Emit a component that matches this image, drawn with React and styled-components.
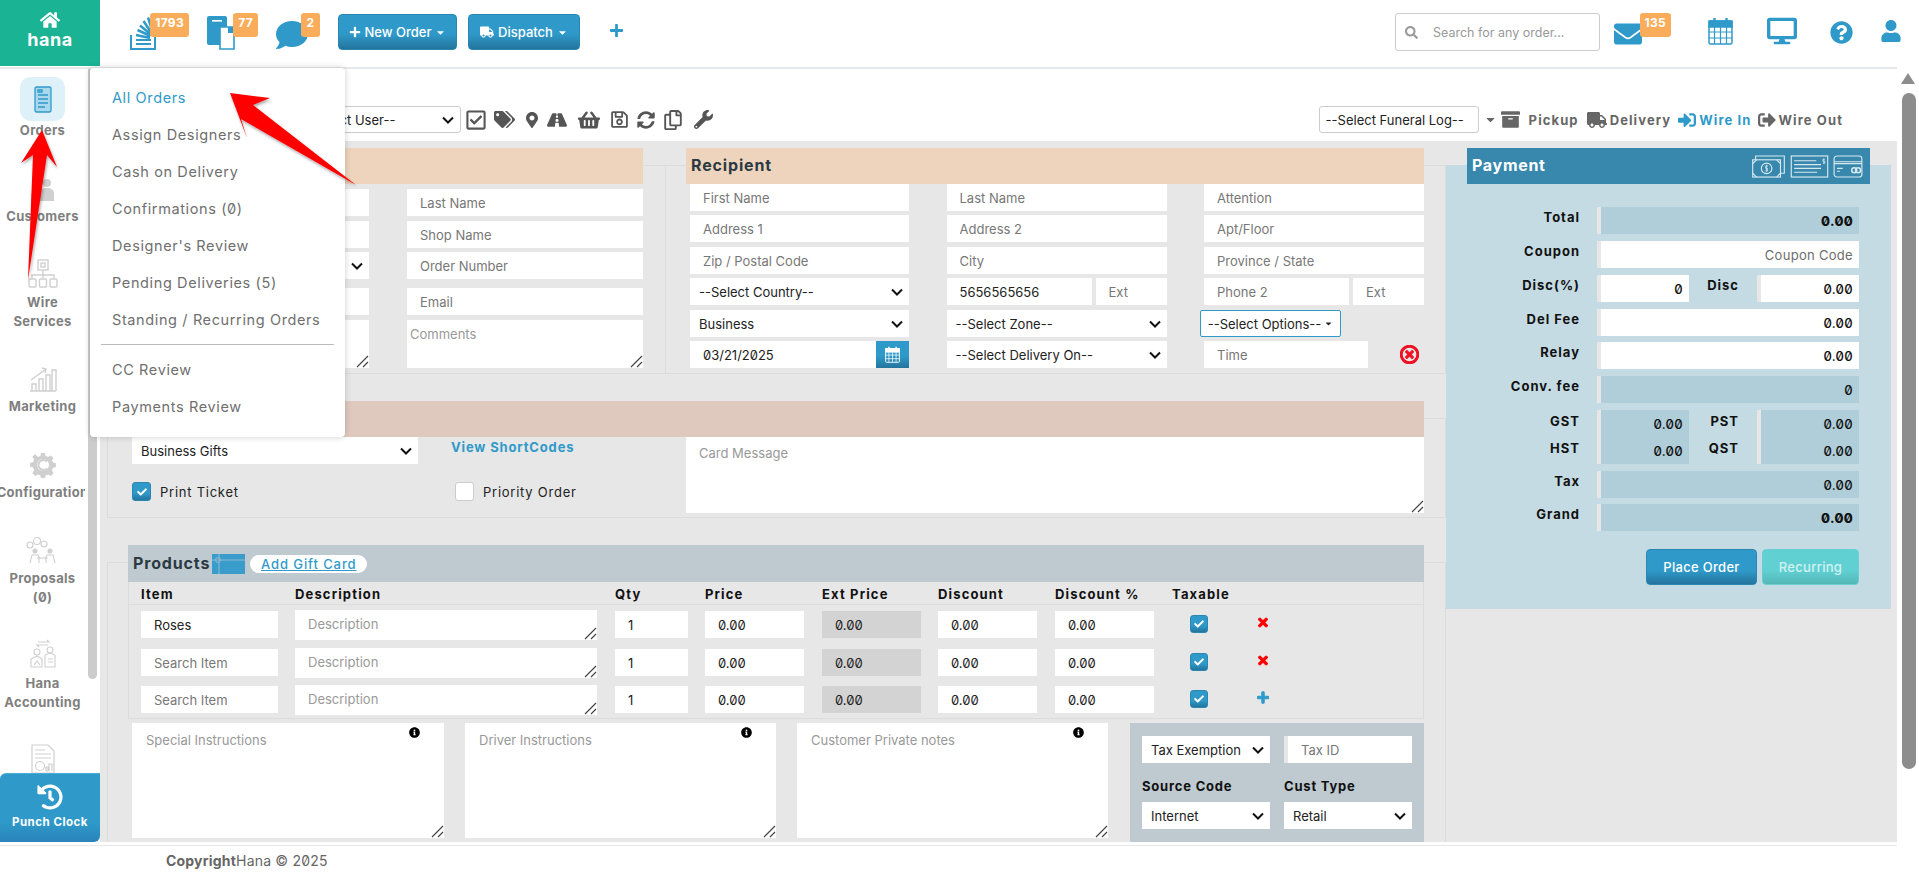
import React from "react";
import styled, { createGlobalStyle } from "styled-components";
import {
  FaHome, FaPlus, FaCaretDown, FaTruck, FaSearch, FaEnvelope, FaDesktop,
  FaQuestionCircle, FaUser, FaRegCheckSquare, FaTags, FaMapMarkerAlt, FaRoad, FaShoppingBasket,
  FaRegSave, FaSyncAlt, FaRegCopy, FaWrench, FaArchive, FaSignInAlt, FaSignOutAlt, FaTimes,
  FaInfoCircle, FaCheck, FaComment, FaHistory, FaRegTimesCircle
} from "react-icons/fa";

const FONT = `Inter, "Noto Sans", "Liberation Sans", sans-serif`;
const BLUE = "#2f9aca";
const CHEVRON = `url("data:image/svg+xml,%3Csvg xmlns='http://www.w3.org/2000/svg' width='12' height='8'%3E%3Cpath d='M1 1.500l5 5 5-5' fill='none' stroke='%23111' stroke-width='2'/%3E%3C/svg%3E")`;
const GRIP = `url("data:image/svg+xml,%3Csvg xmlns='http://www.w3.org/2000/svg' width='14' height='14'%3E%3Cpath d='M2 13L13 2M8 13l5-5' fill='none' stroke='%23444' stroke-width='1.200'/%3E%3C/svg%3E")`;

const Global = createGlobalStyle`
  html, body { margin: 0; padding: 0; overflow: hidden; background: #fff; }
  body { font-family: ${FONT}; font-size: 13px; color: #676a6c; font-feature-settings: "zero" 1; }
  input, select, textarea, button { font-family: inherit; font-feature-settings: inherit; box-sizing: border-box; }
  input::placeholder, textarea::placeholder { color: #777; opacity: 1; }
  textarea::-webkit-resizer { background: ${GRIP} no-repeat right bottom; }
`;

const Page = styled.div`
  position: relative; width: 1919px; height: 875px; overflow: hidden;
  display: flex; flex-direction: column; background: #fff;
`;

/* ---------- header ---------- */
const Header = styled.header`
  height: 69px; flex: none; display: flex; align-items: flex-start;
  border-bottom: 2px solid #e7eaec; box-sizing: border-box;
`;
const Logo = styled.div`
  width: 100px; height: 66px; flex: none; background: #1ab394; color: #fff;
  display: flex; flex-direction: column; align-items: center; padding-top: 11px; box-sizing: border-box;
  font-weight: 700; font-size: 18px; line-height: 22px; letter-spacing: .6px;
  svg { width: 20px; height: 18px; }
`;
const HeaderLeft = styled.div`
  display: flex; align-items: flex-start; padding: 13px 0 0 30px; gap: 18px;
`;
const IconSlot = styled.div`
  position: relative; flex: none; width: ${p => p.$w}px; height: 38px; color: ${BLUE};
  margin-left: ${p => p.$ml || 0}px;
`;
const Glyph = styled.div`
  position: absolute; left: ${p => p.$x || 0}px; top: ${p => p.$y || 0}px;
  display: flex; color: ${BLUE};
`;
const Badge = styled.span`
  position: absolute; top: 0; right: 0; height: 24px; min-width: 19px; box-sizing: border-box;
  background: #f9ad5b; color: #fff; border-radius: 3px; padding: 3px 5px 0; text-align: center;
  font-size: 12px; font-weight: 700; line-height: 13px; letter-spacing: .3px;
`;
const TopButton = styled.button`
  flex: none; width: ${p => p.$w}px; height: 36px; margin: 1px 0 0 ${p => p.$ml || 0}px;
  border: 1px solid #2a87b2; border-radius: 4px; color: #fff; font-size: 13px; font-weight: 500;
  background: linear-gradient(#2f9aca 0%, #2f9aca 55%, #23749c 100%);
  display: flex; align-items: center; justify-content: center; gap: 4px; padding: 0;
`;
const PlusLink = styled.div`
  color: ${BLUE}; margin: 10px 0 0 11px; display: flex; svg { width: 15px; height: 15px; }
`;
const HeaderRight = styled.div`
  margin-left: auto; display: flex; align-items: flex-start; padding: 13px 19px 0 0;
`;
const SearchBox = styled.div`
  width: 205px; height: 38px; border: 1px solid #ccc; border-radius: 3px; box-sizing: border-box;
  display: flex; align-items: center; padding-left: 9px; gap: 15px; color: #999; flex: none;
  svg { width: 13px; height: 13px; }
  input { border: 0; outline: 0; width: 165px; font-size: 12.5px; padding: 0; background: none; }
  input::placeholder { color: #999; }
`;

/* ---------- body ---------- */
const Body = styled.div`
  height: 773px; flex: none; display: flex; padding-right: 22px;
`;
const Sidebar = styled.nav`
  position: relative; width: 100px; flex: none; overflow: hidden; background: #fff;
  padding-top: 8px; box-sizing: border-box;
`;
const SideList = styled.div`
  width: 85px; display: flex; flex-direction: column; gap: 31.8px; overflow: hidden;
`;
const SideItem = styled.div`
  display: flex; flex-direction: column; align-items: center; text-align: center;
  font-size: 13px; line-height: 19px; font-weight: 700; color: #7f7f7f; white-space: nowrap; letter-spacing: .3px;
`;
const SideIcon = styled.div`
  height: 30px; margin-bottom: 5px; display: flex; align-items: flex-end; justify-content: center;
`;
const SideActive = styled.div`
  width: 45px; height: 44px; border-radius: 11px; background: #def0f8; display: flex;
  align-items: center; justify-content: center;
`;
const SideScroll = styled.div`
  position: absolute; left: 88px; top: 0; bottom: 163px; width: 9px; background: #ccc; border-radius: 0 0 5px 5px;
`;
const Punch = styled.div`
  position: absolute; left: 0; bottom: 0; width: 100px; height: 69px; box-sizing: border-box;
  background: linear-gradient(#2f9aca 0%, #2f9aca 70%, #2a83ba 100%); border-top: 1px solid #45b0d8;
  border-radius: 6px 0 6px 0; color: #fff; display: flex; flex-direction: column; align-items: center;
  padding-top: 10px; font-weight: 700; font-size: 11.5px; line-height: 15px; letter-spacing: .5px;
  gap: 5px;
  svg { width: 26px; height: 26px; margin-left: -1px; }
`;

const Main = styled.main`
  flex: 1; display: flex; flex-direction: column; min-width: 0;
`;
const Toolbar = styled.div`
  height: 72px; flex: none; display: flex; align-items: center; background: #fff;
  padding: 29px 54px 0 194px; box-sizing: border-box;
`;
const ToolSelect = styled.select`
  appearance: none; width: ${p => p.$w}px; height: 27px; border: 1px solid #ccc; border-radius: 3px; flex: none;
  background: #fff ${p => p.$plain ? "" : `${CHEVRON} no-repeat right 6px center`};
  font-size: 13px; color: #222; padding: 0 6px; font-weight: 400; letter-spacing: 0;
`;
const ToolIcons = styled.div`
  display: flex; align-items: center; margin-left: 4px; color: #555;
`;
const ToolGlyph = styled.span`
  display: flex; margin-left: ${p => p.$ml || 0}px;
`;
const ToolRight = styled.div`
  margin-left: auto; display: flex; align-items: center; color: #666; font-weight: 700; font-size: 13px; letter-spacing: 1.1px;
`;
const ToolLink = styled.span`
  display: flex; align-items: center; gap: ${p => p.$gap ?? 3}px; margin-left: ${p => p.$ml || 0}px;
  color: ${p => p.$active ? BLUE : "#666"};
`;

const Content = styled.div`
  height: 701px; flex: none; background: #e7e7e7; display: flex; overflow: hidden;
`;
const LeftCol = styled.div`
  width: 1346px; flex: none; padding: 7px 0 0 7px; box-sizing: border-box;
`;
const TopRow = styled.div`
  display: flex;
`;
const Panel = styled.section`
  margin-top: ${p => p.$mt ?? 17}px; width: ${p => p.$w}px; flex: none; box-sizing: border-box;
  border: 1px solid #dcdcdc; border-right-width: ${p => p.$open ? 0 : 1}px;
  padding: 0 ${p => p.$pr ?? 21}px ${p => p.$pb ?? 0}px 20px;
`;
const SectionHead = styled.div`
  margin-top: -18px; height: 36px; background: ${p => p.$bg}; color: #2b3a42; display: flex; align-items: center;
  padding: 0 0 2px 5px; font-size: 16px; font-weight: 700; box-sizing: border-box; letter-spacing: .85px;
`;
const Field = styled.input`
  display: block; width: ${p => p.$w ? p.$w + "px" : "100%"}; height: 27px; border: 0; background: #fff; outline: 0;
  font-size: 13px; padding: 0 13px; color: #222; flex: ${p => p.$w ? "none" : "1 1 0"}; min-width: 0;
`;
const Pick = styled.select`
  appearance: none; display: block; width: ${p => p.$w ? p.$w + "px" : "100%"}; height: 27px; border: 0; outline: 0;
  background: #fff ${CHEVRON} no-repeat right 6px center;
  font-size: 13px; padding: 0 20px 0 9px; color: #222;
`;
const Note = styled.textarea`
  display: block; width: 100%; height: 100%; border: 0; background: #fff; outline: 0; font-size: 13px;
  padding: 6px 3px; box-sizing: border-box; margin: 0;
  &::placeholder { color: #999; }
`;
const CustomerGrid = styled.div`
  margin-top: 5px; padding-left: 4px; display: grid; grid-template-columns: 237px 236px; column-gap: 38px;
  grid-template-rows: 32px 31px 36px 32px 48px; padding-bottom: 4px;
`;
const RecipientGrid = styled.div`
  padding-left: 4px; display: grid; grid-template-columns: 219px 220px 220px; column-gap: 37.5px;
  grid-template-rows: 31px 32px 31px 32px 31px 27px; padding-bottom: 5px;
`;
const Split = styled.div`
  display: flex; gap: ${p => p.$gap ?? 4}px; align-items: flex-start;
`;
const DateBtn = styled.div`
  width: 33px; height: 27px; flex: none; color: #fff; display: flex; align-items: center; justify-content: center;
  background: linear-gradient(#2f9aca 55%, #23749c 100%);
`;
const OptionBtn = styled.div`
  margin-left: -4px; width: 141px; height: 27px; box-sizing: border-box; border: 1px solid ${BLUE}; border-radius: 2px;
  background: #fff; color: #222; display: flex; align-items: center; justify-content: center; gap: 3px; font-size: 13px;
  svg { width: 9px; height: 9px; }
`;
const ClearIcon = styled.div`
  margin-left: auto; color: #ee1122; display: flex; padding: 4px 5px 0 0;
  svg { width: 19px; height: 19px; stroke: currentColor; stroke-width: 30; }
`;
const CardGrid = styled.div`
  padding-left: 4px; display: grid; grid-template-columns: 319px 235px 738px; padding-bottom: 4px;
`;
const CardCol = styled.div`
  display: flex; flex-direction: column; align-items: flex-start;
`;
const ShortLink = styled.div`
  height: 20px; line-height: 20px; color: ${BLUE}; font-weight: 700; font-size: 13px; letter-spacing: .85px;
`;
const CheckRow = styled.label`
  display: flex; align-items: center; gap: 9px; color: #222; font-size: 13px; letter-spacing: .75px;
  margin: ${p => p.$m}; height: 19px;
`;
const Check = styled.span`
  width: ${p => p.$s || 19}px; height: ${p => p.$s || 19}px; flex: none; border-radius: 3px; box-sizing: border-box;
  display: inline-flex; align-items: center; justify-content: center; color: #fff;
  background: ${p => p.$on ? "linear-gradient(#2f9aca 60%, #23749c 100%)" : "#fff"};
  border: 1px solid ${p => p.$on ? "#2a87b2" : "#ccc"};
  svg { width: 10px; height: 10px; }
`;
const CardText = styled.div`
  height: 76px;
  textarea { padding: 8px 13px; }
`;
const ProductsHead = styled(SectionHead)`
  gap: 1px; padding-left: 5px; height: 37px;
`;
const GiftIcon = styled.svg`
  flex: none; margin: 2px 0 0 1px;
`;
const GiftPill = styled.a`
  margin: 2px 0 0 4px; height: 18px; width: 117px; border-radius: 9px; background: #fff; color: ${BLUE};
  font-size: 13px; font-weight: 500; text-decoration: underline; display: flex; align-items: center;
  justify-content: center; letter-spacing: .9px;
`;
const ProductTable = styled.div`
  border: 1px solid #dcdcdc; border-width: 0 1px 1px 1px; box-sizing: border-box;
`;
const ProdRow = styled.div`
  display: grid; grid-template-columns: 154px 320px 90px 117px 116px 117px 117px 71px 40px;
  padding-left: 12px; box-sizing: border-box; height: ${p => p.$h}px; padding-top: ${p => p.$pt || 0}px;
  align-items: start; border-bottom: ${p => p.$line ? "1px solid #dcdcdc" : "0"};
`;
const ColHead = styled.div`
  color: #111; font-weight: 700; font-size: 13px; line-height: 24px; letter-spacing: 1.15px;
`;
const CellInput = styled(Field)`
  width: ${p => p.$cw}px; flex: none; background: ${p => p.$ro ? "#d3d3d3" : "#fff"};
  color: #222;
`;
const DescArea = styled.div`
  width: 302px; height: 30px; margin-top: -1px;
  textarea { padding: 6px 13px; }
`;
const TaxCell = styled.div`
  padding: 4px 0 0 18px;
`;
const ActionCell = styled.div`
  padding-top: 5px; display: flex; justify-content: center; color: ${p => p.$plus ? BLUE : "#f00"};
  svg { width: 12px; height: 13px; stroke: currentColor; stroke-width: 40; }
`;
const NotesRow = styled.div`
  display: flex; margin-top: 4px; padding-left: 4px; gap: 21px;
`;
const NoteBox = styled.div`
  position: relative; width: ${p => p.$w}px; height: 115px; flex: none;
  textarea { padding: 9px 14px; }
`;
const InfoMark = styled.span`
  position: absolute; right: 24px; top: 4px; color: #000; display: flex;
  svg { width: 11px; height: 11px; }
`;
const TaxPanel = styled.div`
  width: 294px; height: 119px; flex: none; background: #becad0; margin-left: 1px; padding: 13px 12px 0;
  box-sizing: border-box; display: grid; grid-template-columns: 128px 128px; column-gap: 14px;
  grid-template-rows: 27px 39px 27px; 
`;
const TaxLabel = styled.div`
  color: #111; font-weight: 700; font-size: 13px; line-height: 20px; align-self: end; padding-bottom: 6px; letter-spacing: .8px;
`;
const TaxId = styled(Field)`
  border-left: 4px solid #e7e7e7; padding-left: 13px;
`;

/* ---------- payment ---------- */
const PayPanel = styled.aside`
  width: 445px; height: 444px; flex: none; margin-top: 24px; background: #c5dbe3; box-sizing: border-box;
  padding: 0 21px;
`;
const PayHead = styled.div`
  margin-top: -17px; height: 36px; background: #3888ae; color: #fff; display: flex; align-items: center;
  padding: 0 7px 2px 5px; font-size: 16px; font-weight: 700; letter-spacing: .7px; justify-content: space-between;
  position: relative; box-sizing: border-box;
`;
const PayIcons = styled.div`
  display: flex; gap: 4px; align-items: center; margin-top: 2px;
`;
const PayRows = styled.div`
  margin: 23px -9px 0 -21px; display: grid;
  grid-template-rows: 34px 34px 34px 33px 34px 34px 61px 33px 27px;
`;
const PayRow = styled.div`
  display: flex; align-items: flex-start;
`;
const PayLabel = styled.div`
  width: ${p => p.$w || 134}px; margin-right: ${p => p.$mr ?? 17}px; flex: none; text-align: right; color: #111;
  font-weight: 700; font-size: 13px; line-height: ${p => p.$lh || 21}px; letter-spacing: 1px; white-space: pre-line;
  margin-top: ${p => p.$mt ?? 0}px;
`;
const PayValue = styled.input`
  width: ${p => p.$w}px; height: 27px; flex: none; border: 0; border-left: 4px solid #e7e7e7; outline: 0;
  background: ${p => p.$ro ? "#afced9" : "#fff"}; color: #111; text-align: right; padding: 0 6px 0 0;
  font-size: 13px; font-weight: ${p => p.$bold ? 800 : 500}; letter-spacing: .3px;
  &::placeholder { color: #6d6d6d; font-weight: 400; font-size: 13px; }
`;
const PayStack = styled.div`
  width: ${p => p.$w}px; height: 54px; flex: none; box-sizing: border-box; border-left: 4px solid #e7e7e7;
  background: #afced9; display: flex; flex-direction: column;
  input { height: 27px; width: 100%; border: 0; background: none; text-align: right; padding: 0 6px 0 0; color: #111;
    font-size: 13px; font-weight: 500; outline: 0; letter-spacing: .3px; }
`;
const PayActions = styled.div`
  display: flex; justify-content: flex-end; gap: 5px; margin: 18px -9px 0 0; padding-right: 20px;
`;
const PayButton = styled.button`
  width: ${p => p.$w}px; height: 36px; border-radius: 4px; padding: 0; font-size: 13px; font-weight: 500;
  color: ${p => p.$muted ? "#d2f2f2" : "#fff"}; letter-spacing: .3px;
  border: 1px solid ${p => p.$muted ? "#67cfd2" : "#2a87b2"};
  background: ${p => p.$muted ? "linear-gradient(#61d0d2 60%, #54b6b6 100%)" : "linear-gradient(#2f9aca 60%, #23749c 100%)"};
`;

/* ---------- footer ---------- */
const Footer = styled.footer`
  margin-top: 3px; flex: 1; border-top: 1px solid #e7e7e7; padding: 5px 0 0 166px; color: #666;
  font-size: 14px; line-height: 20px; letter-spacing: .2px;
  b { font-weight: 700; }
`;

/* ---------- overlays ---------- */
const PageScroll = styled.div`
  position: absolute; right: 0; top: 67px; bottom: 0; width: 22px; background: #fff;
`;
const ScrollUp = styled.div`
  position: absolute; left: 4px; top: 6px; width: 0; height: 0;
  border-left: 7px solid transparent; border-right: 7px solid transparent; border-bottom: 11px solid #8d8d8d;
`;
const ScrollThumb = styled.div`
  position: absolute; left: 5px; top: 26px; width: 14px; height: 676px; background: #8d8d8d; border-radius: 7px;
`;
const Menu = styled.div`
  position: absolute; left: 90px; top: 68px; width: 255px; height: 369px; background: #fff; border-radius: 4px;
  box-shadow: 0 0 6px rgba(0,0,0,.2); padding: 11px 11px 0; box-sizing: border-box;
  display: flex; flex-direction: column;
`;
const MenuItem = styled.div`
  height: 37px; line-height: 37px; padding-left: 11px; font-size: 14.5px; white-space: nowrap; letter-spacing: .62px;
  color: ${p => p.$active ? BLUE : "#6f6f6f"};
`;
const MenuRule = styled.div`
  height: 1px; background: #bbb; margin: 6px 0 6px;
`;
const Arrows = styled.svg`
  position: absolute; left: 0; top: 0; pointer-events: none;
`;

/* ---------- icons ---------- */
const G = { stroke: "#cfcfcf", fill: "none", strokeWidth: 1.4 };

const StackIcon = () => (
  <svg width="26" height="36" viewBox="0 0 26 36" fill="none" stroke={BLUE}>
    <path d="M1 21v14h24V23" strokeWidth="2" />
    <path d="M6 26h15M6 30h15" strokeWidth="2.200" />
    <path d="M6 21l14 3M7.500 16l13 6M10 11.500l11 9M13.500 7l8 12M18 3.500l4.500 14" strokeWidth="2.500" />
  </svg>
);
const CopyDocs = () => (
  <svg width="33" height="34" viewBox="0 0 33 34">
    <rect x="0" y="0" width="20" height="29" rx="2" fill={BLUE} />
    <rect x="5" y="4" width="10" height="1.600" fill="#fff" />
    <path d="M13 11h14v22H13z" fill="#fff" stroke={BLUE} strokeWidth="1.600" />
    <path d="M21 11h6v6h-6z" fill={BLUE} />
  </svg>
);
const CalendarGrid = ({ w, h, c }) => (
  <svg width={w} height={h} viewBox="0 0 25 28" fill="none" stroke={c} strokeWidth="1.500">
    <rect x="1" y="4" width="23" height="23" rx="1.500" fill="none" />
    <rect x="1" y="4" width="23" height="6" fill={c} />
    <path d="M6.500 1v6M18.500 1v6" strokeWidth="2.400" />
    <path d="M1 15h23M1 21h23M6.500 10v17M12.500 10v17M18.500 10v17" strokeWidth="1.200" />
  </svg>
);
const OrdersIcon = () => (
  <svg width="18" height="27" viewBox="0 0 18 27" fill="#a9d7ec" stroke={BLUE} strokeWidth="1.300">
    <rect x="1" y="1" width="16" height="25" rx="1.500" />
    <path d="M4 4h4v2H4zM4 9h10M4 13h10M4 17h10M4 21h7" fill="none" />
  </svg>
);
const CustomersIcon = () => (
  <svg width="30" height="24" viewBox="0 0 30 24" fill="#d0d0d0">
    <circle cx="19" cy="5" r="4" /><path d="M12 23v-8c0-3 3-5 7-5s7 2 7 5v8z" />
    <circle cx="9" cy="9" r="3" /><path d="M3 23v-6c0-2 3-4 6-4s4 1 4 4v6z" />
  </svg>
);
const WireIcon = () => (
  <svg width="30" height="29" viewBox="0 0 30 29" {...G}>
    <rect x="10" y="1" width="10" height="10" /><rect x="13" y="4" width="4" height="4" />
    <path d="M15 11v6M4 19v-3h22v3M15 14v5" />
    <rect x="1" y="20" width="7" height="8" rx="1" /><rect x="11.500" y="20" width="7" height="8" rx="1" /><rect x="22" y="20" width="7" height="8" rx="1" />
  </svg>
);
const MarketIcon = () => (
  <svg width="28" height="26" viewBox="0 0 28 26" {...G}>
    <path d="M1 25h26M3 25v-7h4v7M10 25V13h4v12M17 25V9h4v16M23 25V4h4v21" />
    <path d="M2 14L17 3M13 2l4 1-1 4" />
  </svg>
);
const ConfigIcon = () => (
  <svg width="26" height="26" viewBox="0 0 26 26">
    <path d="M11 1h4l.6 3 2.600 1 2.600-1.600 2.800 2.800L21.900 8l1 2.600 3 .6v4l-3 .6-1 2.600 1.700 2.800-2.800 2.800-2.600-1.600-2.600 1-.6 3h-4l-.6-3-2.600-1-2.600 1.600-2.800-2.800L4.100 18l-1-2.600-3-.6v-4l3-.6 1-2.600-1.700-2.800 2.800-2.800L7.800 5l2.600-1z" fill="#cfcfcf" />
    <circle cx="13" cy="13" r="6" fill="#fff" />
    <path d="M17 9.500a5 5 0 1 0 0 7" fill="none" stroke="#cfcfcf" strokeWidth="2" />
  </svg>
);
const ProposalIcon = () => (
  <svg width="33" height="28" viewBox="0 0 33 28" {...G} strokeWidth="1.100">
    <circle cx="4" cy="9" r="3" /><circle cx="11" cy="5" r="3.500" /><circle cx="18" cy="8" r="3" />
    <circle cx="9" cy="15" r="2" fill="#cfcfcf" /><circle cx="24" cy="15" r="2" fill="#cfcfcf" />
    <path d="M4 27l2-8h6l2 4M29 27l-2-8h-6l-2 4M11 22h11M13 22v5M20 22v5" />
  </svg>
);
const AccountIcon = () => (
  <svg width="28" height="30" viewBox="0 0 28 30" {...G} strokeWidth="1.100">
    <path d="M9 3h11l-2-2M19 6H8l2 2" />
    <circle cx="8" cy="13" r="3" /><circle cx="21" cy="11" r="3" />
    <path d="M2 28v-8l6-3 5 3v8zM16 28V16l5-2 5 2v12zM19 20h5M19 23h5M5 26l3-4 3 4" />
  </svg>
);
const ReportIcon = () => (
  <svg width="24" height="30" viewBox="0 0 24 30" {...G} strokeWidth="1.200">
    <path d="M1 1h16l6 6v22H1zM4 6h10M4 10h16M4 14h16" />
    <circle cx="9" cy="22" r="4.500" /><path d="M15 27v-4h2v4h-2M18 27v-7h3v7" />
  </svg>
);
const CashIcon = () => (
  <svg width="35" height="23" viewBox="0 0 35 24" fill="none" stroke="#d7e8ef" strokeWidth="1.200">
    <path d="M4 5V1h30v18h-4" /><rect x="1" y="5" width="29" height="18" />
    <circle cx="15.500" cy="14" r="5.500" /><path d="M1 9l4-4M30 9l-4-4M1 19l4 4M30 19l-4 4" />
    <path d="M17 11.500h-2.500v2.500h2v2.500H14M15.500 10v8" strokeWidth=".8" />
  </svg>
);
const ChequeIcon = () => (
  <svg width="39" height="23" viewBox="0 0 40 24" fill="none" stroke="#d7e8ef" strokeWidth="1.200">
    <rect x="1" y="1" width="38" height="22" />
    <path d="M4 6h23M4 10h28M4 14h28M4 18h24" />
    <path d="M36 4.500h-2v2h2v2h-2M35 3.500v6" strokeWidth=".8" />
  </svg>
);
const CardIcon = () => (
  <svg width="30" height="23" viewBox="0 0 31 24" fill="none" stroke="#d7e8ef" strokeWidth="1.200">
    <rect x="1" y="1" width="29" height="22" rx="3" />
    <path d="M1 7h29M1 9h29M4 14h6M4 17h3" />
    <circle cx="22" cy="16" r="2.600" strokeWidth="1.600" /><circle cx="26" cy="16" r="2.600" strokeWidth="1.600" />
  </svg>
);
const GiftCard = () => (
  <GiftIcon width="33" height="20" viewBox="0 0 33 20">
    <rect width="33" height="20" fill="#3a9ccb" />
    <path d="M0 6h33M7 0v20" stroke="#8dbad0" strokeWidth="1" />
    <circle cx="6" cy="6" r="2.500" fill="none" stroke="#8dbad0" />
  </GiftIcon>
);

/* ---------- data ---------- */
const sideItems = [
  { icon: <CustomersIcon />, label: "Customers" },
  { icon: <WireIcon />, label: <>Wire<br />Services</> },
  { icon: <MarketIcon />, label: "Marketing" },
  { icon: <ConfigIcon />, label: "Configuration" },
  { icon: <ProposalIcon />, label: <>Proposals<br />(0)</> },
  { icon: <AccountIcon />, label: <>Hana<br />Accounting</> },
  { icon: <ReportIcon />, label: "Reports" },
];
const menuTop = ["Assign Designers", "Cash on Delivery", "Confirmations (0)", "Designer's Review", "Pending Deliveries (5)", "Standing / Recurring Orders"];

const Opt = ({ t, w }) => <Pick $w={w} defaultValue={t}><option>{t}</option></Pick>;

function ProductRow({ item, h, pt, plus, line }) {
  return (
    <ProdRow $h={h} $pt={pt} $line={line}>
      <CellInput $cw={137} placeholder="Search Item" defaultValue={item} />
      <DescArea><Note placeholder="Description" /></DescArea>
      <CellInput $cw={73} defaultValue="1" />
      <CellInput $cw={99} defaultValue="0.00" />
      <CellInput $cw={99} $ro defaultValue="0.00" readOnly />
      <CellInput $cw={99} defaultValue="0.00" />
      <CellInput $cw={99} defaultValue="0.00" />
      <TaxCell><Check $on $s={18}><FaCheck /></Check></TaxCell>
      <ActionCell $plus={plus}>{plus ? <FaPlus /> : <FaTimes />}</ActionCell>
    </ProdRow>
  );
}

export default function App() {
  return (
    <Page>
      <Global />
      <Header>
        <Logo><FaHome />hana</Logo>
        <HeaderLeft>
          <IconSlot $w={59}><Glyph $y={1}><StackIcon /></Glyph><Badge>1793</Badge></IconSlot>
          <IconSlot $w={51}><Glyph $y={3}><CopyDocs /></Glyph><Badge>77</Badge></IconSlot>
          <IconSlot $w={44}><Glyph $y={6}><FaComment size={32} /></Glyph><Badge>2</Badge></IconSlot>
          <TopButton $w={119}><FaPlus size={12} />New Order<FaCaretDown size={11} /></TopButton>
          <TopButton $w={112} $ml={-7}><FaTruck size={14} />Dispatch<FaCaretDown size={11} /></TopButton>
          <PlusLink><FaPlus /></PlusLink>
        </HeaderLeft>
        <HeaderRight>
          <SearchBox><FaSearch /><input placeholder="Search for any order..." /></SearchBox>
          <IconSlot $w={57} $ml={14}><Glyph $y={7}><FaEnvelope size={28} /></Glyph><Badge>135</Badge></IconSlot>
          <IconSlot $w={25} $ml={37}><Glyph $y={4}><CalendarGrid w={25} h={28} c={BLUE} /></Glyph></IconSlot>
          <IconSlot $w={30} $ml={34}><Glyph $y={3}><FaDesktop size={30} /></Glyph></IconSlot>
          <IconSlot $w={23} $ml={33}><Glyph $y={8}><FaQuestionCircle size={23} /></Glyph></IconSlot>
          <IconSlot $w={20} $ml={27}><Glyph $y={7}><FaUser size={22} /></Glyph></IconSlot>
        </HeaderRight>
      </Header>

      <Body>
        <Sidebar>
          <SideList>
            <SideItem>
              <SideActive><OrdersIcon /></SideActive>
              Orders
            </SideItem>
            {sideItems.map((s, i) => (
              <SideItem key={i}><SideIcon>{s.icon}</SideIcon>{s.label}</SideItem>
            ))}
          </SideList>
          <SideScroll />
          <Punch><FaHistory />Punch Clock</Punch>
        </Sidebar>

        <Main>
          <Toolbar>
            <ToolSelect $w={167} defaultValue="--Select User--"><option>--Select User--</option></ToolSelect>
            <ToolIcons>
              <ToolGlyph><FaRegCheckSquare size={22} /></ToolGlyph>
              <ToolGlyph $ml={7}><FaTags size={21} /></ToolGlyph>
              <ToolGlyph $ml={9}><FaMapMarkerAlt size={16} /></ToolGlyph>
              <ToolGlyph $ml={7}><FaRoad size={20} /></ToolGlyph>
              <ToolGlyph $ml={11}><FaShoppingBasket size={22} /></ToolGlyph>
              <ToolGlyph $ml={10}><FaRegSave size={19} /></ToolGlyph>
              <ToolGlyph $ml={8}><FaSyncAlt size={18} /></ToolGlyph>
              <ToolGlyph $ml={8}><FaRegCopy size={20} /></ToolGlyph>
              <ToolGlyph $ml={11}><FaWrench size={19} /></ToolGlyph>
            </ToolIcons>
            <ToolRight>
              <ToolSelect $w={160} $plain defaultValue="--Select Funeral Log--"><option>--Select Funeral Log--</option></ToolSelect>
              <ToolLink $ml={5}><FaCaretDown size={13} /></ToolLink>
              <ToolLink $ml={4} $gap={9}><FaArchive size={19} />Pickup</ToolLink>
              <ToolLink $ml={8} $gap={3}><FaTruck size={20} />Delivery</ToolLink>
              <ToolLink $ml={7} $gap={3} $active><FaSignInAlt size={18} />Wire In</ToolLink>
              <ToolLink $ml={6} $gap={3}><FaSignOutAlt size={18} />Wire Out</ToolLink>
            </ToolRight>
          </Toolbar>

          <Content>
            <LeftCol>
              <TopRow>
                <Panel $w={558} $pr={22} $open>
                  <SectionHead $bg="#eed4bd">Customer</SectionHead>
                  <CustomerGrid>
                    <Field placeholder="First Name" /><Field placeholder="Last Name" />
                    <Field placeholder="Company" /><Field placeholder="Shop Name" />
                    <Opt t="--Select--" /><Field placeholder="Order Number" />
                    <Field placeholder="Phone" /><Field placeholder="Email" />
                    <Note /><Note placeholder="Comments" />
                  </CustomerGrid>
                </Panel>
                <Panel $w={781}>
                  <SectionHead $bg="#eed4bd">Recipient</SectionHead>
                  <RecipientGrid>
                    <Field placeholder="First Name" /><Field placeholder="Last Name" /><Field placeholder="Attention" />
                    <Field placeholder="Address 1" /><Field placeholder="Address 2" /><Field placeholder="Apt/Floor" />
                    <Field placeholder="Zip / Postal Code" /><Field placeholder="City" /><Field placeholder="Province / State" />
                    <Opt t="--Select Country--" />
                    <Split><Field defaultValue="5656565656" /><Field $w={71} placeholder="Ext" /></Split>
                    <Split><Field placeholder="Phone 2" /><Field $w={71} placeholder="Ext" /></Split>
                    <Opt t="Business" />
                    <Opt t="--Select Zone--" />
                    <OptionBtn>--Select Options--<FaCaretDown /></OptionBtn>
                    <Split $gap={0}><Field defaultValue="03/21/2025" /><DateBtn><CalendarGrid w={15} h={17} c="#fff" /></DateBtn></Split>
                    <Opt t="--Select Delivery On--" />
                    <Split $gap={0}><Field $w={164} placeholder="Time" /><ClearIcon><FaRegTimesCircle /></ClearIcon></Split>
                  </RecipientGrid>
                </Panel>
              </TopRow>

              <Panel $w={1339} $mt={44}>
                <SectionHead $bg="#dfc9bf">Card</SectionHead>
                <CardGrid>
                  <CardCol>
                    <Opt t="Business Gifts" w={286} />
                    <CheckRow $m="18px 0 0"><Check $on><FaCheck /></Check>Print Ticket</CheckRow>
                  </CardCol>
                  <CardCol>
                    <ShortLink>View ShortCodes</ShortLink>
                    <CheckRow $m="25px 0 0 4px"><Check />Priority Order</CheckRow>
                  </CardCol>
                  <CardText><Note placeholder="Card Message" /></CardText>
                </CardGrid>
              </Panel>

              <Panel $w={1339} $mt={44} $pb={10}>
                <ProductsHead $bg="#becad0">Products<GiftCard /><GiftPill>Add Gift Card</GiftPill></ProductsHead>
                <ProductTable>
                  <ProdRow $h={23} $line>
                    <ColHead>Item</ColHead><ColHead>Description</ColHead><ColHead>Qty</ColHead><ColHead>Price</ColHead>
                    <ColHead>Ext Price</ColHead><ColHead>Discount</ColHead><ColHead>Discount %</ColHead><ColHead>Taxable</ColHead>
                  </ProdRow>
                  <ProductRow item="Roses" h={38} pt={6} />
                  <ProductRow h={37} pt={6} />
                  <ProductRow h={38} pt={6} plus />
                </ProductTable>
                <NotesRow>
                  <NoteBox $w={312}><Note placeholder="Special Instructions" /><InfoMark><FaInfoCircle /></InfoMark></NoteBox>
                  <NoteBox $w={311}><Note placeholder="Driver Instructions" /><InfoMark><FaInfoCircle /></InfoMark></NoteBox>
                  <NoteBox $w={311}><Note placeholder="Customer Private notes" /><InfoMark><FaInfoCircle /></InfoMark></NoteBox>
                  <TaxPanel>
                    <Opt t="Tax Exemption" />
                    <TaxId placeholder="Tax ID" />
                    <TaxLabel>Source Code</TaxLabel>
                    <TaxLabel>Cust Type</TaxLabel>
                    <Opt t="Internet" />
                    <Opt t="Retail" />
                  </TaxPanel>
                </NotesRow>
              </Panel>
            </LeftCol>

            <PayPanel>
              <PayHead>Payment<PayIcons><CashIcon /><ChequeIcon /><CardIcon /></PayIcons></PayHead>
              <PayRows>
                <PayRow><PayLabel>Total</PayLabel><PayValue $w={262} $ro $bold defaultValue="0.00" readOnly /></PayRow>
                <PayRow><PayLabel>Coupon</PayLabel><PayValue $w={262} placeholder="Coupon Code" /></PayRow>
                <PayRow>
                  <PayLabel>Disc(%)</PayLabel><PayValue $w={92} defaultValue="0" />
                  <PayLabel $w={50} $mr={18}>Disc</PayLabel><PayValue $w={102} defaultValue="0.00" />
                </PayRow>
                <PayRow><PayLabel>Del Fee</PayLabel><PayValue $w={262} defaultValue="0.00" /></PayRow>
                <PayRow><PayLabel>Relay</PayLabel><PayValue $w={262} defaultValue="0.00" /></PayRow>
                <PayRow><PayLabel>Conv. fee</PayLabel><PayValue $w={262} $ro defaultValue="0" readOnly /></PayRow>
                <PayRow>
                  <PayLabel $lh={27} $mt={-2}>{"GST\nHST"}</PayLabel>
                  <PayStack $w={92}><input defaultValue="0.00" readOnly /><input defaultValue="0.00" readOnly /></PayStack>
                  <PayLabel $w={50} $mr={18} $lh={27} $mt={-2}>{"PST\nQST"}</PayLabel>
                  <PayStack $w={102}><input defaultValue="0.00" readOnly /><input defaultValue="0.00" readOnly /></PayStack>
                </PayRow>
                <PayRow><PayLabel>Tax</PayLabel><PayValue $w={262} $ro defaultValue="0.00" readOnly /></PayRow>
                <PayRow><PayLabel>Grand</PayLabel><PayValue $w={262} $ro $bold defaultValue="0.00" readOnly /></PayRow>
              </PayRows>
              <PayActions>
                <PayButton $w={111}>Place Order</PayButton>
                <PayButton $w={97} $muted>Recurring</PayButton>
              </PayActions>
            </PayPanel>
          </Content>
        </Main>
      </Body>

      <Footer><b>Copyright</b>Hana © 2025</Footer>

      <PageScroll><ScrollUp /><ScrollThumb /></PageScroll>

      <Menu>
        <MenuItem $active>All Orders</MenuItem>
        {menuTop.map(m => <MenuItem key={m}>{m}</MenuItem>)}
        <MenuRule />
        <MenuItem>CC Review</MenuItem>
        <MenuItem>Payments Review</MenuItem>
      </Menu>

      <Arrows width="400" height="300" viewBox="0 0 400 300">
        <defs>
          <filter id="arrowShadow" x="-20%" y="-20%" width="140%" height="140%">
            <feDropShadow dx="1" dy="2" stdDeviation="1.500" floodColor="#000" floodOpacity=".35" />
          </filter>
        </defs>
        <g filter="url(#arrowShadow)" fill="#ff0000">
          <polygon points="230,93 270,98 253,105 356,185 241,119 247,138" />
          <polygon points="42,130 57,167 47,155 28,280 33,155 21,163" />
        </g>
      </Arrows>
    </Page>
  );
}
